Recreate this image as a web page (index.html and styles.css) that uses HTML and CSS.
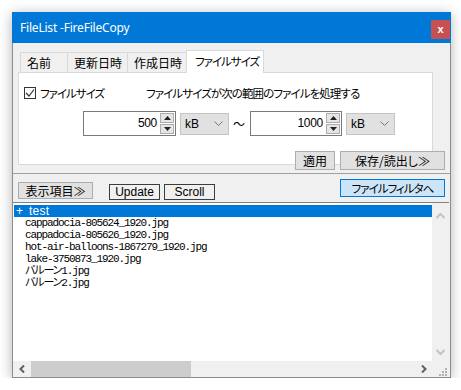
FILE: index.html
```html
<!DOCTYPE html>
<html lang="ja">
<head>
    <meta charset="UTF-8">
    <title>FileList -FireFileCopy</title>
    <link rel="stylesheet" href="styles.css">
</head>
<body>
    <div class="window">
        <div class="titlebar">
            <span class="title">FileList -FireFileCopy</span>
            <button class="close-btn">x</button>
        </div>

        <div class="filter-area">
            <div class="tabs">
                <div class="tab tab-name">名前</div>
                <div class="tab tab-mtime">更新日時</div>
                <div class="tab tab-ctime">作成日時</div>
                <div class="tab tab-size active"><span class="kana">ファイルサイズ</span></div>
            </div>
            <div class="tab-panel">
                <div class="check-row">
                    <label class="check">
                        <span class="check-box">
                            <svg width="10" height="10" viewBox="0 0 10 10"><path d="M1 5 L4 8 L9 1.5" fill="none" stroke="#333" stroke-width="1.2"/></svg>
                        </span>
                        <span class="kana">ファイルサイズ</span>
                    </label>
                    <span class="desc">ファイルサイズが次の範囲のファイルを処理する</span>
                </div>
                <div class="range-row">
                    <div class="spin spin-min">
                        <span class="spin-value">500</span>
                        <div class="spin-btns">
                            <span class="spin-btn"><svg width="7" height="4" viewBox="0 0 7 4"><path d="M3.5 0 L7 4 L0 4 Z" fill="#222"/></svg></span>
                            <span class="spin-btn"><svg width="7" height="4" viewBox="0 0 7 4"><path d="M0 0 L7 0 L3.5 4 Z" fill="#222"/></svg></span>
                        </div>
                    </div>
                    <div class="combo">
                        <span>kB</span>
                        <svg width="9" height="5" viewBox="0 0 9 5"><path d="M0.5 0.5 L4.5 4.5 L8.5 0.5" fill="none" stroke="#777"/></svg>
                    </div>
                    <span class="tilde">〜</span>
                    <div class="spin spin-max">
                        <span class="spin-value">1000</span>
                        <div class="spin-btns">
                            <span class="spin-btn"><svg width="7" height="4" viewBox="0 0 7 4"><path d="M3.5 0 L7 4 L0 4 Z" fill="#222"/></svg></span>
                            <span class="spin-btn"><svg width="7" height="4" viewBox="0 0 7 4"><path d="M0 0 L7 0 L3.5 4 Z" fill="#222"/></svg></span>
                        </div>
                    </div>
                    <div class="combo">
                        <span>kB</span>
                        <svg width="9" height="5" viewBox="0 0 9 5"><path d="M0.5 0.5 L4.5 4.5 L8.5 0.5" fill="none" stroke="#777"/></svg>
                    </div>
                </div>
            </div>
            <div class="panel-btns">
                <button class="btn btn-apply">適用</button>
                <button class="btn btn-save">保存/読出し≫</button>
            </div>
        </div>

        <div class="divider"></div>

        <div class="toolbar">
            <button class="btn btn-columns">表示項目≫</button>
            <button class="btn-flat btn-update">Update</button>
            <button class="btn-flat btn-scroll">Scroll</button>
            <button class="btn btn-filter"><span class="kana">ファイルフィルタへ</span></button>
        </div>

        <div class="list">
            <div class="list-body">
                <div class="row selected">+ test</div>
                <div class="row">cappadocia-805624_1920.jpg</div>
                <div class="row">cappadocia-805626_1920.jpg</div>
                <div class="row">hot-air-balloons-1867279_1920.jpg</div>
                <div class="row">lake-3750873_1920.jpg</div>
                <div class="row">バルーン1.jpg</div>
                <div class="row">バルーン2.jpg</div>
            </div>
            <div class="vscroll">
                <svg width="9" height="6" viewBox="0 0 9 6"><path d="M0.5 5 L4.5 1 L8.5 5" fill="none" stroke="#c2c2c2" stroke-width="2"/></svg>
                <svg width="9" height="6" viewBox="0 0 9 6"><path d="M0.5 1 L4.5 5 L8.5 1" fill="none" stroke="#c2c2c2" stroke-width="2"/></svg>
            </div>
            <div class="hscroll">
                <svg class="arrow" width="6" height="8" viewBox="0 0 6 8"><path d="M5 0.5 L1.5 4 L5 7.5" fill="none" stroke="#606060" stroke-width="2"/></svg>
                <div class="track"><div class="thumb"></div></div>
                <svg class="arrow" width="6" height="8" viewBox="0 0 6 8"><path d="M1 0.5 L4.5 4 L1 7.5" fill="none" stroke="#606060" stroke-width="2"/></svg>
            </div>
            <div class="grip">
                <svg width="10" height="10" viewBox="0 0 10 10" fill="#b0b0b0">
                    <rect x="8" y="2" width="2" height="2"/>
                    <rect x="5" y="5" width="2" height="2"/><rect x="8" y="5" width="2" height="2"/>
                    <rect x="2" y="8" width="2" height="2"/><rect x="5" y="8" width="2" height="2"/><rect x="8" y="8" width="2" height="2"/>
                </svg>
            </div>
        </div>
    </div>
</body>
</html>
```

FILE: styles.css
```css
* {
    margin: 0;
    padding: 0;
    box-sizing: border-box;
}

body {
    background-color: white;
    padding: 12px 0 0 12px;
    font-family: "Noto Sans CJK JP", "Noto Sans", sans-serif;
    font-size: 12px;
    font-feature-settings: "palt";
    color: black;
}

button {
    font-family: inherit;
    font-size: 12px;
    font-feature-settings: "palt";
    color: black;
}

.kana {
    font-size: 11.5px;
    letter-spacing: -1px;
    white-space: nowrap;
}

.window {
    width: 439px;
    height: 366px;
    background-color: #f0f0f0;
    border: 1px solid #8c8c8c;
    border-top: none;
    box-shadow: 0 2px 12px rgba(0, 0, 0, 0.3);
    display: flex;
    flex-direction: column;
}

/* title bar */
.titlebar {
    height: 31px;
    margin: 0 -1px;
    background-color: #0078d7;
    display: flex;
    align-items: center;
    justify-content: space-between;
    padding-left: 8px;
    padding-right: 1px;
}

.title {
    color: white;
    font-family: "Noto Sans", sans-serif;
    font-size: 12px;
    letter-spacing: -0.2px;
}

.close-btn {
    width: 19px;
    height: 19px;
    margin-top: 4px;
    border: none;
    background-color: #c75050;
    color: white;
    font-family: "Liberation Sans", sans-serif;
    font-weight: bold;
    font-size: 11px;
    line-height: 17px;
}

/* filter tabs */
.filter-area {
    padding: 7px 5px 0 5px;
}

.tabs {
    display: flex;
    align-items: flex-end;
    padding-left: 2px;
    height: 22px;
}

.tab {
    height: 20px;
    border: 1px solid #d9d9d9;
    border-bottom: none;
    margin-right: -1px;
    background-color: #f0f0f0;
    padding-left: 6px;
    line-height: 19px;
    white-space: nowrap;
}

.tab-name { width: 48px; }
.tab-mtime { width: 61px; }
.tab-ctime { width: 60px; }

.tab.active {
    width: 78px;
    height: 23px;
    margin-bottom: -1px;
    background-color: white;
    position: relative;
    z-index: 1;
    line-height: 20px;
    padding-left: 8px;
}

.tab-panel {
    height: 93px;
    margin-right: 12px;
    background-color: white;
    border: 1px solid #d9d9d9;
    padding: 14px 0 0 5px;
}

.check-row {
    display: flex;
    align-items: center;
    height: 12px;
}

.check {
    display: flex;
    align-items: center;
    gap: 4px;
    width: 122px;
}

.check-box {
    width: 12px;
    height: 12px;
    border: 1px solid #333;
    display: flex;
    align-items: center;
    justify-content: center;
}

.desc {
    font-size: 11.5px;
    letter-spacing: -0.9px;
    white-space: nowrap;
}

.range-row {
    display: flex;
    align-items: center;
    margin-top: 12px;
    padding-left: 59px;
    gap: 4px;
}

.spin {
    height: 25px;
    border: 1px solid #7a7a7a;
    background-color: white;
    display: flex;
    align-items: stretch;
}

.spin-min { width: 93px; }
.spin-max { width: 92px; }

.spin-value {
    flex: 1;
    text-align: right;
    padding-right: 3px;
    line-height: 22px;
    font-family: "Liberation Sans", sans-serif;
    letter-spacing: -0.3px;
}

.spin-btns {
    width: 15px;
    padding: 1px 1px 1px 0;
    display: flex;
    flex-direction: column;
    gap: 1px;
}

.spin-btn {
    flex: 1;
    background-color: #e5e5e5;
    border: 1px solid #adadad;
    display: flex;
    align-items: center;
    justify-content: center;
}

.combo {
    width: 49px;
    height: 22px;
    background-color: #e1e1e1;
    border: 1px solid #c4c4c4;
    display: flex;
    align-items: center;
    justify-content: space-between;
    padding: 0 5px 0 4px;
    font-family: "Liberation Sans", sans-serif;
}

.tilde {
    width: 10px;
    margin-right: 3px;
    font-size: 12px;
}

.panel-btns {
    display: flex;
    justify-content: flex-end;
    gap: 5px;
    margin-top: -14px;
    position: relative;
}

.btn {
    height: 19px;
    background-color: #e1e1e1;
    border: 1px solid #adadad;
    line-height: 16px;
}

.btn-apply { width: 40px; }
.btn-save { width: 105px; }

.divider {
    height: 1px;
    margin-top: 3px;
    background-color: #a0a0a0;
}

/* toolbar */
.toolbar {
    height: 28px;
    display: flex;
    align-items: flex-start;
    padding: 0 5px;
}

.btn-columns {
    width: 75px;
    height: 17px;
    margin-top: 8px;
    margin-right: 16px;
}

.btn-flat {
    height: 16px;
    margin-top: 10px;
    width: 51px;
    background-color: #f0f0f0;
    border: 1px solid #3c3c3c;
    line-height: 13px;
    font-family: "Liberation Sans", sans-serif;
    font-size: 12px;
}

.btn-update { margin-right: 4px; }

.btn-filter {
    width: 105px;
    height: 18px;
    margin-top: 5px;
    margin-left: auto;
    background-color: #cce4f7;
    border: 1px solid #0078d7;
}

/* file list */
.list {
    flex: 1;
    border-top: 1px solid #828282;
    background-color: white;
    display: grid;
    grid-template-columns: 1fr 17px;
    grid-template-rows: 1fr 16px;
    margin-right: 1px;
}

.list-body {
    padding: 2px 0 0 1px;
    font-family: "Liberation Mono", "Noto Sans CJK JP", monospace;
    font-size: 11px;
    letter-spacing: -1.1px;
}

.row {
    height: 12px;
    line-height: 12px;
    padding-left: 11px;
    white-space: nowrap;
}

.row.selected {
    background-color: #0078d7;
    color: white;
    padding-left: 2px;
    font-family: "Liberation Sans", sans-serif;
    font-size: 12px;
    letter-spacing: 0.3px;
    word-spacing: 2px;
}

.vscroll {
    background-color: #f0f0f0;
    display: flex;
    flex-direction: column;
    justify-content: space-between;
    align-items: center;
    padding: 10px 0 6px;
}

.hscroll {
    background-color: #f0f0f0;
    display: flex;
    align-items: center;
    padding: 0 5px 0 6px;
    gap: 6px;
}

.track {
    flex: 1;
    height: 16px;
}

.thumb {
    width: 160px;
    height: 16px;
    background-color: #cdcdcd;
}

.grip {
    background-color: #f0f0f0;
    display: flex;
    align-items: flex-end;
    justify-content: flex-end;
    padding: 0 2px 1px 0;
}
```
